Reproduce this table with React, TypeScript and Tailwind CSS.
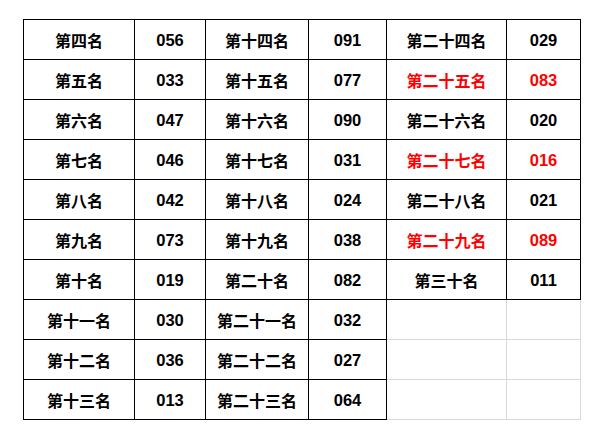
const rows: (string | null)[][] = [
  ['第四名', '056', '第十四名', '091', '第二十四名', '029'],
  ['第五名', '033', '第十五名', '077', '第二十五名', '083'],
  ['第六名', '047', '第十六名', '090', '第二十六名', '020'],
  ['第七名', '046', '第十七名', '031', '第二十七名', '016'],
  ['第八名', '042', '第十八名', '024', '第二十八名', '021'],
  ['第九名', '073', '第十九名', '038', '第二十九名', '089'],
  ['第十名', '019', '第二十名', '082', '第三十名', '011'],
  ['第十一名', '030', '第二十一名', '032', null, null],
  ['第十二名', '036', '第二十二名', '027', null, null],
  ['第十三名', '013', '第二十三名', '064', null, null],
];

const redRows = [1, 3, 5];

const cn = { fontFamily: '"Noto Sans CJK SC", "Liberation Sans", sans-serif' };
const num = { fontFamily: '"Liberation Sans", Arial, sans-serif' };

export default function App() {
  return (
    <div className="w-[607px] h-[443px] bg-white pt-[19px] pl-[23px]">
      <div className="grid grid-cols-[111px_71px_103px_78px_120px_74px] w-fit border-l border-t border-black">
        {rows.map((row, r) =>
          row.map((cell, c) => {
            const empty = cell === null;
            const red = redRows.includes(r) && c >= 4;
            const isNum = c % 2 === 1;
            return (
              <div
                key={`${r}-${c}`}
                className={`h-[40px] flex items-center justify-center border-r border-b font-bold leading-none ${
                  empty ? 'border-[#d9d9d9]' : 'border-black'
                } ${red ? 'text-[#ff0000]' : 'text-black'} ${isNum ? 'text-[16.5px] pt-[2px]' : 'text-[16px]'}`}
                style={isNum ? num : cn}
              >
                {cell}
              </div>
            );
          })
        )}
      </div>
    </div>
  );
}
